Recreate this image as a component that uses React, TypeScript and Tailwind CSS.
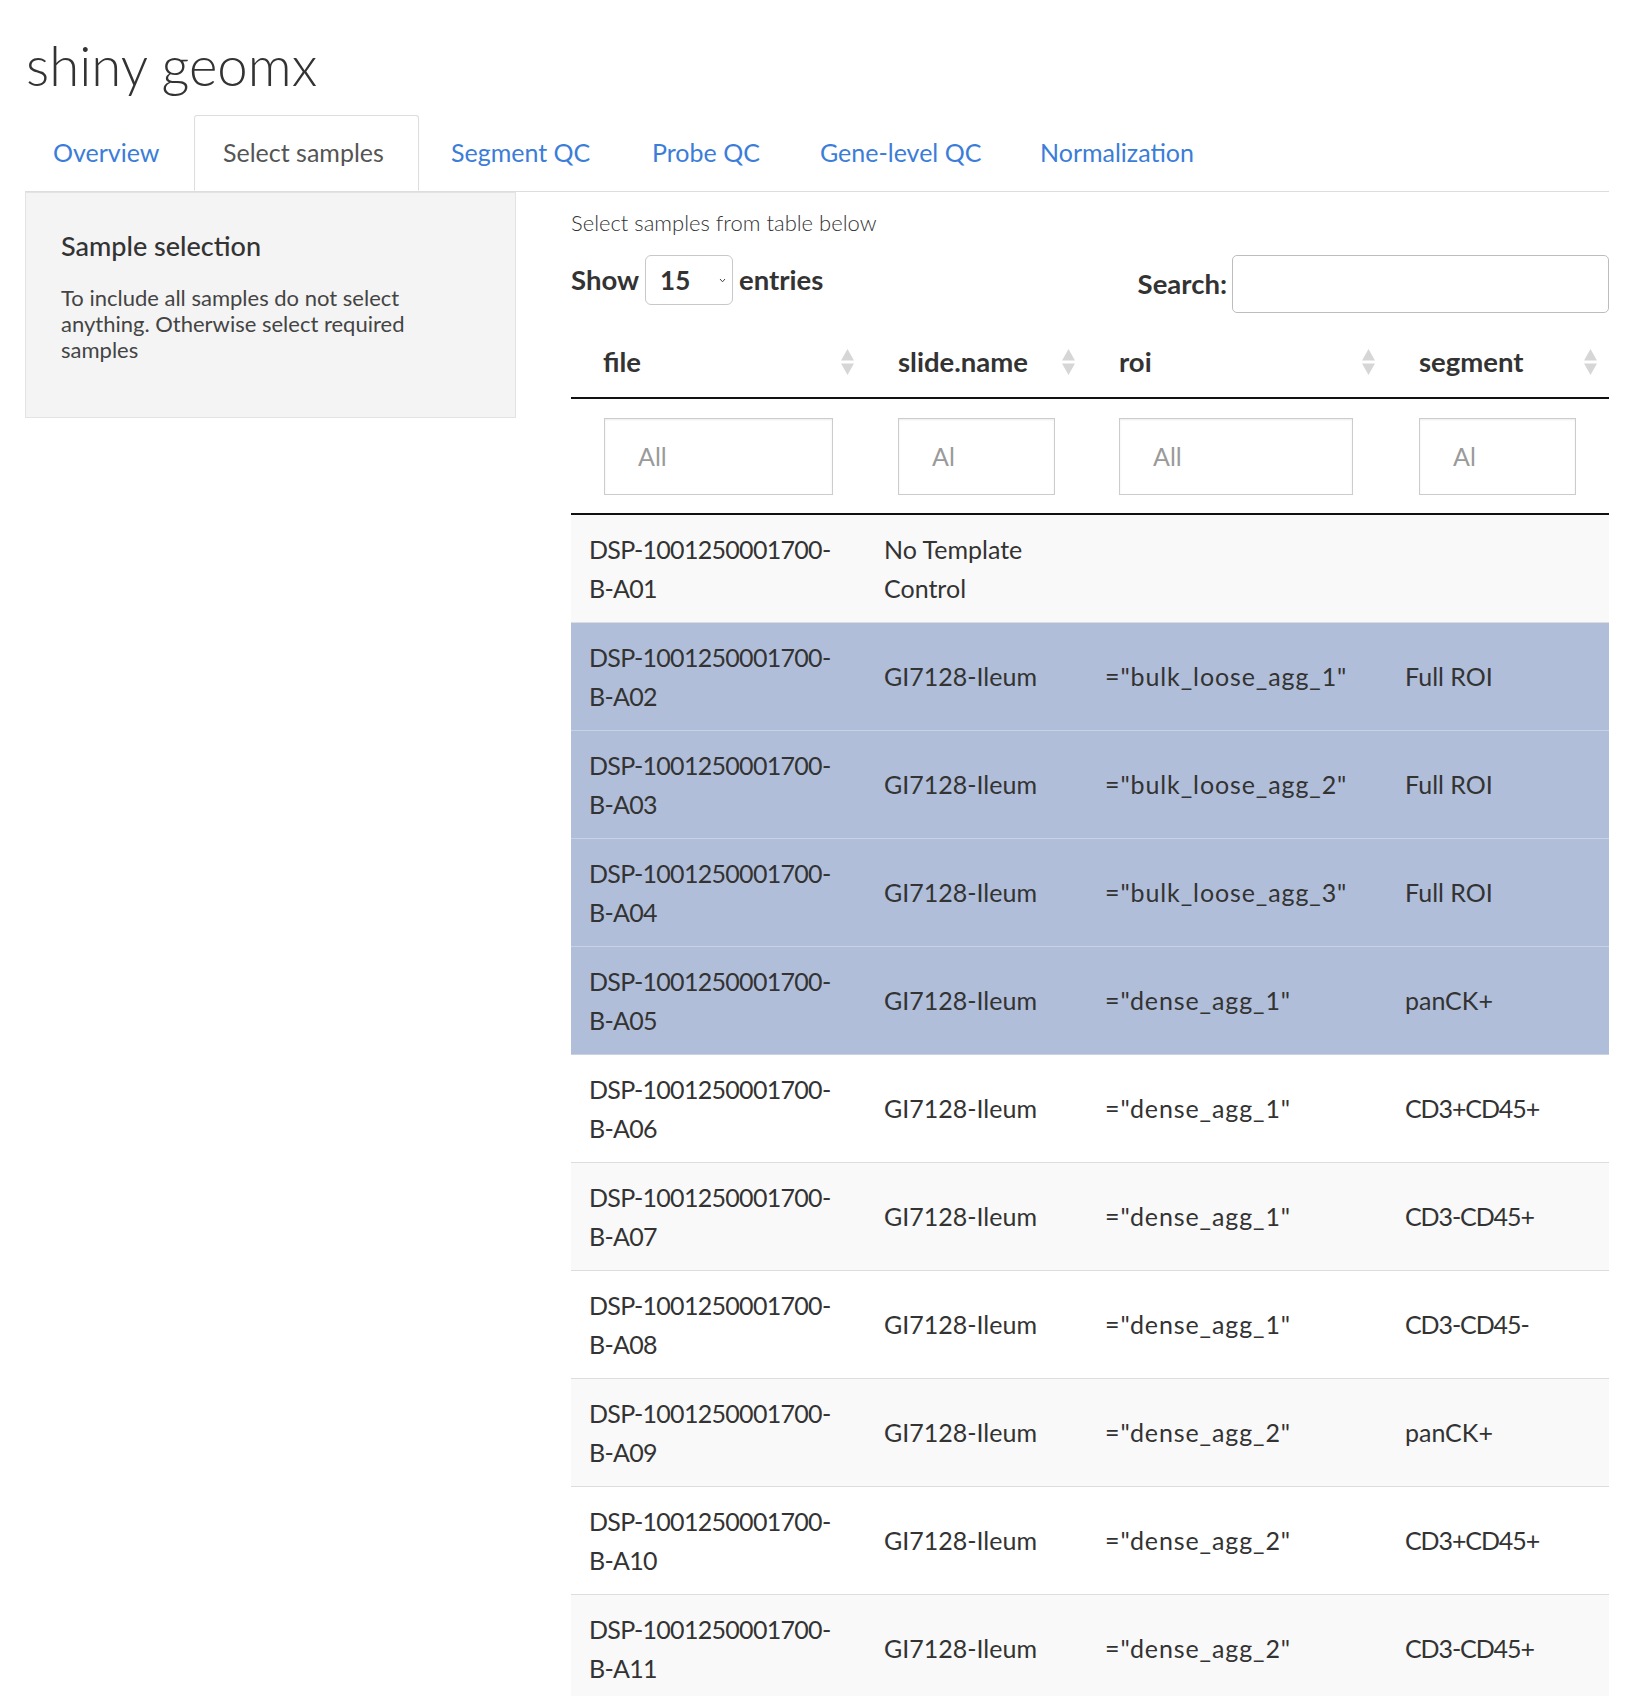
import React from "react";

type Row = { id: string; slide: string[]; roi: string; seg: string; sel: boolean };

const rows: Row[] = [
  { id: "A01", slide: ["No Template", "Control"], roi: "", seg: "", sel: false },
  { id: "A02", slide: ["GI7128-Ileum"], roi: '="bulk_loose_agg_1"', seg: "Full ROI", sel: true },
  { id: "A03", slide: ["GI7128-Ileum"], roi: '="bulk_loose_agg_2"', seg: "Full ROI", sel: true },
  { id: "A04", slide: ["GI7128-Ileum"], roi: '="bulk_loose_agg_3"', seg: "Full ROI", sel: true },
  { id: "A05", slide: ["GI7128-Ileum"], roi: '="dense_agg_1"', seg: "panCK+", sel: true },
  { id: "A06", slide: ["GI7128-Ileum"], roi: '="dense_agg_1"', seg: "CD3+CD45+", sel: false },
  { id: "A07", slide: ["GI7128-Ileum"], roi: '="dense_agg_1"', seg: "CD3-CD45+", sel: false },
  { id: "A08", slide: ["GI7128-Ileum"], roi: '="dense_agg_1"', seg: "CD3-CD45-", sel: false },
  { id: "A09", slide: ["GI7128-Ileum"], roi: '="dense_agg_2"', seg: "panCK+", sel: false },
  { id: "A10", slide: ["GI7128-Ileum"], roi: '="dense_agg_2"', seg: "CD3+CD45+", sel: false },
  { id: "A11", slide: ["GI7128-Ileum"], roi: '="dense_agg_2"', seg: "CD3-CD45+", sel: false },
];

function SortIcon() {
  return (
    <svg width="15" height="28" viewBox="0 0 15 28" className="shrink-0">
      <path d="M7.5 1 L14 12.5 L1 12.5 Z" fill="#d6d6d6" />
      <path d="M7.5 27 L14 15.5 L1 15.5 Z" fill="#d6d6d6" />
    </svg>
  );
}

function FilterBox({ clip }: { clip: boolean }) {
  return (
    <div className="w-full h-[77px] border border-[#cccccc] bg-white shadow-[inset_0_1px_2px_rgba(0,0,0,0.08)] flex items-center pl-[33px]">
      <span className={`text-[25px] text-[#9a9a9a] overflow-hidden whitespace-nowrap ${clip ? "w-[24px]" : ""}`}>All</span>
    </div>
  );
}

const tabs = [
  { label: "Overview", w: "w-[165px]", active: false },
  { label: "Select samples", w: "w-[225px]", active: true },
  { label: "Segment QC", w: "w-[197px]", active: false },
  { label: "Probe QC", w: "w-[164px]", active: false },
  { label: "Gene-level QC", w: "w-[216px]", active: false },
  { label: "Normalization", w: "w-[216px]", active: false },
];

export default function App() {
  return (
    <div className="min-h-screen bg-white text-[#333333] font-['Lato','Noto_Sans',sans-serif]">
      <div className="pl-[25px] pr-[21px]">
        <h1 className="pt-[30px] text-[54.5px] leading-[70px] font-light text-[#333333] pl-[1px]">shiny geomx</h1>

        <div className="mt-[15px] flex border-b border-[#dddddd]">
          {tabs.map((t) => (
            <div
              key={t.label}
              className={`${t.w} mr-[4px] h-[76px] pl-[28px] flex items-center text-[25px] whitespace-nowrap ${
                t.active
                  ? "bg-white border border-[#dddddd] border-b-white -mb-px rounded-t-[3px] text-[#555555]"
                  : "text-[#3b7dd8]"
              }`}
            >
              {t.label}
            </div>
          ))}
        </div>

        <div className="flex gap-[55px]">
          <div className="w-[491px] shrink-0">
            <div className="h-[226px] bg-[#f4f4f4] border border-[#e3e3e3] pl-[35px] pr-[40px] pt-[36px]">
              <div className="text-[27px] leading-[34px] font-medium text-[#333333]">Sample selection</div>
              <p className="mt-[22px] text-[22px] leading-[26px] text-[#444444]">
                To include all samples do not select anything. Otherwise select required samples
              </p>
            </div>
          </div>

          <div className="flex-1 min-w-0">
            <div className="pt-[16px] text-[22px] leading-[30px] font-light text-[#333333]">Select samples from table below</div>

            <div className="mt-[17px] flex justify-between items-start">
              <div className="flex items-center h-[50px] text-[27.5px] font-bold">
                <span>Show</span>
                <div className="ml-[6px] w-[88px] h-[50px] border border-[#c8c8c8] rounded-[6px] flex items-center justify-between pl-[14px] pr-[6px] text-[26px]">
                  <span>15</span>
                  <svg width="7" height="5" viewBox="0 0 7 5">
                    <polyline points="1,1 3.5,3.8 6,1" fill="none" stroke="#444" strokeWidth="1" />
                  </svg>
                </div>
                <span className="ml-[6px]">entries</span>
              </div>
              <div className="flex items-center h-[58px] text-[27.5px] font-bold">
                <span>Search:</span>
                <div className="ml-[5px] w-[377px] h-[58px] border border-[#bdbdbd] rounded-[5px] bg-white" />
              </div>
            </div>

            <div className="mt-[10px]">
              <div className="flex h-[76px] border-b-2 border-[#111111]">
                {[
                  { l: "file", w: "w-[295px]" },
                  { l: "slide.name", w: "w-[221px]" },
                  { l: "roi", w: "w-[300px]" },
                  { l: "segment", w: "flex-1" },
                ].map((h) => (
                  <div key={h.l} className={`${h.w} pl-[32px] pr-[11px] flex items-center justify-between text-[27.5px] font-bold pt-[3px]`}>
                    <span>{h.l}</span>
                    <SortIcon />
                  </div>
                ))}
              </div>

              <div className="flex h-[116px] border-b-2 border-[#111111] pt-[19px]">
                <div className="w-[295px] pl-[33px] pr-[33px]"><FilterBox clip={false} /></div>
                <div className="w-[221px] pl-[32px] pr-[32px]"><FilterBox clip={true} /></div>
                <div className="w-[300px] pl-[32px] pr-[34px]"><FilterBox clip={false} /></div>
                <div className="flex-1 pl-[32px] pr-[33px]"><FilterBox clip={true} /></div>
              </div>

              {rows.map((r, i) => {
                const bg = r.sel
                  ? "bg-[#b0bed9] border-[#c9d2e4]"
                  : i % 2 === 0
                  ? "bg-[#f9f9f9] border-[#dddddd]"
                  : "bg-white border-[#dddddd]";
                const segTrack = r.seg.startsWith("CD") ? "tracking-[-1.1px]" : "";
                return (
                  <div key={r.id} className={`flex h-[108px] border-b ${bg} text-[25px] leading-[39px] text-[#333333]`}>
                    <div className="w-[295px] pl-[18px] flex flex-col justify-center whitespace-nowrap tracking-[-0.7px]">
                      <span>DSP-1001250001700-</span>
                      <span>B-{r.id}</span>
                    </div>
                    <div className="w-[221px] pl-[18px] flex flex-col justify-center whitespace-nowrap">
                      {r.slide.map((s) => (
                        <span key={s}>{s}</span>
                      ))}
                    </div>
                    <div className="w-[300px] pl-[18px] flex items-center whitespace-nowrap tracking-[0.9px]">{r.roi}</div>
                    <div className={`flex-1 pl-[18px] flex items-center whitespace-nowrap ${segTrack}`}>{r.seg}</div>
                  </div>
                );
              })}
            </div>
          </div>
        </div>
      </div>
    </div>
  );
}
